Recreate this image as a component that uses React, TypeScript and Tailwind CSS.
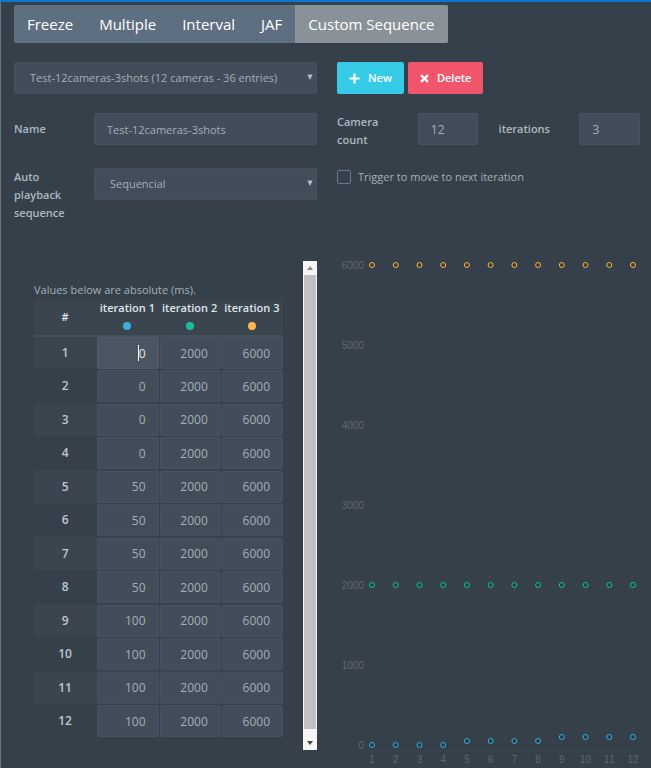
import { useState } from 'react';

const tabs = ['Freeze', 'Multiple', 'Interval', 'JAF', 'Custom Sequence'];

const iterations = [
  { name: 'iteration 1', dot: 'bg-[#3bafda]', stroke: 'stroke-[#3bafda]', fill: 'fill-[#223c4a]' },
  { name: 'iteration 2', dot: 'bg-[#1abc9c]', stroke: 'stroke-[#1abc9c]', fill: 'fill-[#21423f]' },
  { name: 'iteration 3', dot: 'bg-[#ffb74d]', stroke: 'stroke-[#f5b748]', fill: 'fill-[#413c30]' },
];

const initialRows = Array.from({ length: 12 }, (_, i) => [Math.floor(i / 4) * 50, 2000, 6000]);

const fieldClass =
  'w-full min-w-0 rounded-xs border border-[#46525d] bg-[#414d58] text-[#a3afb9] outline-none';
const labelClass = 'text-[11px] leading-[18px] font-semibold text-[#acb8c2]';

function Dropdown({ id, label, options }: { id: string; label?: string; options: string[] }) {
  return (
    <div className="relative w-full">
      <select id={id} aria-label={label} className={`${fieldClass} block h-8 appearance-none pr-6 pl-[15px]`}>
        {options.map((o) => <option key={o}>{o}</option>)}
      </select>
      <svg viewBox="0 0 6 6" className="pointer-events-none absolute top-3 right-1 size-1.5 fill-[#b4bec6]">
        <path d="M0.3 0.5h5.4L3 6z" />
      </svg>
    </div>
  );
}

function SequenceChart({ rows }: { rows: number[][] }) {
  const x = (i: number) => 35 + (i * 261) / (rows.length - 1);
  const y = (value: number) => 484 - (value * 480) / 6000;

  return (
    <svg viewBox="0 0 303 507" className="w-full" role="img" aria-label="Sequence timings">
      {rows.map((_, i) => (
        <line key={i} x1={x(i)} x2={x(i)} y1={4} y2={484} className="stroke-[#3a454f]" />
      ))}
      <line x1={35} x2={296} y1={484} y2={484} className="stroke-[#2f3841]" />
      <g className="fill-[#5f676e] font-['Liberation_Sans',sans-serif] text-[10px]">
        {[0, 1000, 2000, 3000, 4000, 5000, 6000].map((v) => (
          <text key={v} x={27} y={y(v) + 4} textAnchor="end">{v}</text>
        ))}
        {rows.map((_, i) => (
          <text key={i} x={x(i)} y={502} textAnchor="middle">{i + 1}</text>
        ))}
      </g>
      {iterations.map((it, s) =>
        rows.map((row, i) => (
          <circle key={`${s}-${i}`} cx={x(i)} cy={y(row[s])} r={2.5} className={`${it.stroke} ${it.fill}`} />
        ))
      )}
    </svg>
  );
}

function Scrollbar() {
  return (
    <div className="flex w-3.5 shrink-0 flex-col bg-[#f5f5f5]" aria-hidden="true">
      <div className="flex h-3.5 items-center justify-center">
        <svg viewBox="0 0 6 4" className="h-1 w-1.5 fill-[#8a8a8a]"><path d="M3 0l3 4H0z" /></svg>
      </div>
      <div className="mx-px flex-1 bg-[#c1c1c1]" />
      <div className="flex h-[21px] items-end justify-center pb-[5px]">
        <svg viewBox="0 0 6 4" className="h-1 w-1.5 fill-[#444]"><path d="M0 0h6L3 4z" /></svg>
      </div>
    </div>
  );
}

export default function App() {
  const [active, setActive] = useState('Custom Sequence');
  const [rows, setRows] = useState(initialRows);
  const [name, setName] = useState('Test-12cameras-3shots');

  const update = (r: number, c: number, value: string) => {
    setRows(rows.map((row, i) => (i === r ? row.map((v, j) => (j === c ? Number(value) || 0 : v)) : row)));
  };

  return (
    <div className="min-h-screen border-t-2 border-l border-t-[#0a78d2] border-l-[#67737d] bg-[#36404a] pt-[3px] pr-[11px] pl-[13px] font-['Open_Sans',sans-serif] text-[11px] text-[#a3afb9]">
      <div className="flex">
        <div className="flex overflow-hidden rounded-xs bg-[#5f6f82]">
          {tabs.map((tab) => (
            <button key={tab} onClick={() => setActive(tab)}
              className={`h-[38px] px-[13px] text-[15px] whitespace-nowrap text-white ${tab === active ? 'bg-[#8a9299]' : ''}`}>
              {tab}
            </button>
          ))}
        </div>
      </div>

      <div className="mt-[19px] grid grid-cols-2 gap-x-5">
        <Dropdown id="sequence" label="Sequence" options={['Test-12cameras-3shots (12 cameras - 36 entries)']} />
        <div className="flex gap-1">
          <button className="flex h-8 items-center gap-2 rounded-xs bg-[#35cbe6] px-3 font-semibold text-white">
            <svg viewBox="0 0 11 11" className="size-[11px] fill-white"><path d="M4.4 0.5h2.2v3.9h3.9v2.2H6.6v3.9H4.4V6.6H.5V4.4h3.9z" /></svg>
            New
          </button>
          <button className="flex h-8 items-center gap-2 rounded-xs bg-[#f1556c] px-3 font-semibold text-white">
            <svg viewBox="0 0 10 10" className="size-[9px] stroke-white stroke-[2.6]"><path d="M1.2 1.2l7.6 7.6M8.8 1.2L1.2 8.8" /></svg>
            Delete
          </button>
        </div>
      </div>

      <div className="mt-[19px] grid grid-cols-2 gap-x-5">
        <div className="flex items-start">
          <label htmlFor="name" className={`${labelClass} w-20 shrink-0 pt-[7px]`}>Name</label>
          <input id="name" value={name} onChange={(e) => setName(e.target.value)} className={`${fieldClass} h-8 px-3`} />
        </div>
        <div className="grid grid-cols-[4fr_3fr_1fr_4fr_3fr] items-start">
          <label htmlFor="cameras" className={`${labelClass} pr-5`}>Camera count</label>
          <input id="cameras" defaultValue="12" className={`${fieldClass} h-8 px-3 text-[12px]`} />
          <span />
          <label htmlFor="iterations" className={`${labelClass} pt-[7px]`}>iterations</label>
          <input id="iterations" defaultValue="3" className={`${fieldClass} h-8 px-3 text-[12px]`} />
        </div>
      </div>

      <div className="mt-[19px] grid grid-cols-2 gap-x-5">
        <div className="flex items-start">
          <label htmlFor="playback" className={`${labelClass} w-20 shrink-0 pr-2`}>Auto playback sequence</label>
          <Dropdown id="playback" options={['Sequencial']} />
        </div>
        <label className="flex h-[18px] items-center gap-[7px]">
          <input type="checkbox" className="size-3.5 appearance-none rounded-xs border border-[#64798c]" />
          Trigger to move to next iteration
        </label>
      </div>

      <div className="mt-[39px] grid grid-cols-2 items-start gap-x-5">
        <div className="flex">
          <div className="min-w-0 flex-1 px-5 pt-5 pb-3">
            <p className="leading-[18px]">Values below are absolute (ms).</p>
            <table className="w-full table-fixed border-collapse">
              <thead className="bg-[#3b454f]">
                <tr className="h-[37px] border-b-2 border-[#44505b] text-[#dfe5ea]">
                  <th className="w-1/4 font-semibold">#</th>
                  {iterations.map((it) => (
                    <th key={it.name} className="p-0 align-top leading-[18px] font-semibold whitespace-nowrap">
                      {it.name}
                      <span className={`mx-auto mt-[5px] block size-2 rounded-full ${it.dot}`} />
                    </th>
                  ))}
                </tr>
              </thead>
              <tbody className="text-[12px]">
                {rows.map((row, r) => (
                  <tr key={r} className="odd:h-[33px] odd:bg-[#3b454f] even:h-[34px]">
                    <th className="p-0 font-semibold text-[#bcc7d0]">{r + 1}</th>
                    {row.map((value, c) => {
                      const focused = r === 0 && c === 0;
                      return (
                        <td key={c} className="p-0 pl-px">
                          <div className="relative">
                            <input value={value} onChange={(e) => update(r, c, e.target.value)}
                              aria-label={`Camera ${r + 1} ${iterations[c].name}`}
                              className={`block h-8 w-full rounded-xs border px-3 text-right outline-none ${focused ? 'border-[#505d69] bg-[#4a5661] text-[#e3e9ee]' : 'border-[#46525d] bg-[#414d58]'}`} />
                            {focused && <span className="absolute top-2 right-5 h-4 w-px bg-white" />}
                          </div>
                        </td>
                      );
                    })}
                  </tr>
                ))}
              </tbody>
            </table>
          </div>
          <Scrollbar />
        </div>
        <SequenceChart rows={rows} />
      </div>
    </div>
  );
}
